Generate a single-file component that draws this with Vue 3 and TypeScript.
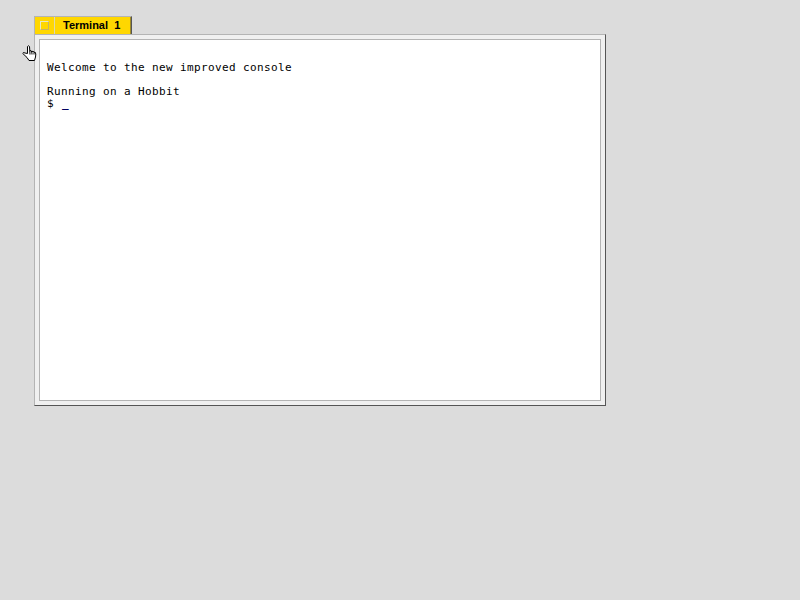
<script setup lang="ts">
const lines: string[] = ['Welcome to the new improved console', '', 'Running on a Hobbit']
</script>

<template>
  <div class="desktop">
    <svg class="hand" width="15" height="17" viewBox="0 0 15 17">
      <path d="M5.500 8.500V1.500Q6.300 0 7.500 1.500L7.800 6L9 5.500L9.800 7L11 6L12 7.500L13 7L13.800 9L13.500 12L12.500 15.500H7L5 12.500L.8 8.500L1.500 7.500L3 8z" fill="#fff" stroke="#000" stroke-width="1" stroke-linejoin="round" />
      <path d="M7.800 6L8 9.500M9.800 7L10 9.500M12 7.500V9.500" fill="none" stroke="#000" stroke-width="1" />
    </svg>
    <div class="tab">
      <div class="tab-box"><span class="tab-icon"></span></div>
      <div class="tab-title">Terminal&nbsp; 1</div>
    </div>
    <div class="window">
      <div class="console">
        <div v-for="(line, i) in lines" :key="i" class="line">{{ line || '\u00a0' }}</div>
        <div class="line">$ <span class="cursor">_</span></div>
      </div>
    </div>
  </div>
</template>

<style scoped>
.desktop {
  position: relative;
  width: 800px;
  height: 600px;
  box-sizing: border-box;
  padding: 16px 0 0 34px;
  background: #dcdcdc;
  overflow: hidden;
}
.hand {
  position: absolute;
  left: 22px;
  top: 45px;
}
.tab {
  display: flex;
  width: 98px;
  height: 18px;
  box-sizing: border-box;
  border-top: 1px solid #b4b4b4;
  border-left: 1px solid #b4b4b4;
  border-right: 1px solid #555;
  box-shadow: inset -1px 0 0 #a08c28;
  background: #ffd700;
}
.tab-box {
  width: 19px;
  display: flex;
  align-items: center;
  justify-content: center;
  border-right: 1px solid #ddd8b0;
}
.tab-icon {
  width: 9px;
  height: 9px;
  box-sizing: border-box;
  border: 1px solid;
  border-color: #e6e6c8 #c8b464 #c8b464 #e6e6c8;
}
.tab-title {
  padding-left: 8px;
  font: bold 11px/17px "Liberation Sans", sans-serif;
  color: #000;
}
.window {
  width: 572px;
  height: 372px;
  box-sizing: border-box;
  padding: 4px;
  background: #f0f0f0;
  border: 1px solid;
  border-color: #b4b4b4 #555 #555 #b4b4b4;
}
.console {
  width: 100%;
  height: 100%;
  box-sizing: border-box;
  padding: 22px 7px;
  background: #fff;
  border: 1px solid #b4b4b4;
  font: 11px/12px "DejaVu Sans Mono", monospace;
  letter-spacing: 0.38px;
  color: #000;
}
.line {
  height: 12px;
  white-space: pre;
}
.cursor {
  margin-left: 1px;
  font-weight: bold;
  color: #000060;
}
</style>

<style>
html, body { background: #dcdcdc; }
</style>
